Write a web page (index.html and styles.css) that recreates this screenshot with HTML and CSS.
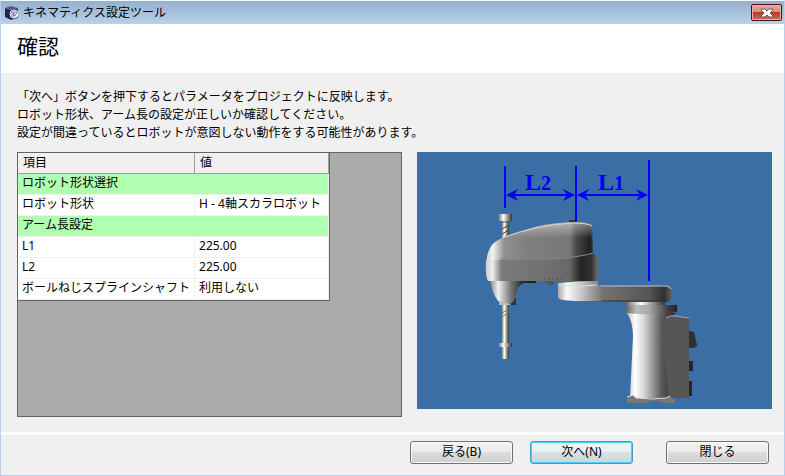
FILE: index.html
```html
<!DOCTYPE html>
<html lang="ja">
<head>
<meta charset="utf-8">
<title>キネマティクス設定ツール</title>
<link rel="stylesheet" href="styles.css">
</head>
<body>
<div class="window">
  <div class="titlebar">
    <svg class="app-icon" viewBox="0 0 16 16" aria-hidden="true">
      <path d="M1 3 7 1 14 3 8 5Z" fill="#555a88"/>
      <path d="M1 3 7 5V15L1 12Z" fill="#23264f"/>
      <path d="M7 5 14 3V13L7 15Z" fill="#383c70"/>
      <circle cx="10" cy="9" r="4" fill="#7377a3" stroke="#e8e8f4"/>
      <path d="M12 7.500A2.500 2.500 0 1 0 12 11M10 9h2.500v3" fill="none" stroke="#fff"/>
    </svg>
    <span class="caption">キネマティクス設定ツール</span>
    <button class="close" type="button" aria-label="閉じる">
      <svg viewBox="0 0 14 10" aria-hidden="true">
        <path d="M1 1h4l2 2 2-2h4v1l-3 3 3 3v1H9L7 7 5 9H1V8l3-3-3-3Z" fill="#fff" stroke="#5a5a68"/>
      </svg>
    </button>
  </div>
  <header class="heading"><h1>確認</h1></header>
  <main class="content">
    <p class="message">「次へ」ボタンを押下するとパラメータをプロジェクトに反映します。<br>ロボット形状、アーム長の設定が正しいか確認してください。<br>設定が間違っているとロボットが意図しない動作をする可能性があります。</p>
    <div class="panels">
      <div class="grid-panel">
        <table class="params">
          <thead><tr><th scope="col">項目</th><th scope="col">値</th></tr></thead>
          <tbody>
            <tr class="group"><td colspan="2">ロボット形状選択</td></tr>
            <tr><td>ロボット形状</td><td>H - 4軸スカラロボット</td></tr>
            <tr class="group"><td colspan="2">アーム長設定</td></tr>
            <tr><td>L1</td><td>225.00</td></tr>
            <tr><td>L2</td><td>225.00</td></tr>
            <tr><td>ボールねじスプラインシャフト</td><td>利用しない</td></tr>
          </tbody>
        </table>
      </div>
      <svg class="robot" viewBox="417 152 355 257" role="img" aria-label="L1 L2">
        <defs>
          <linearGradient id="metal"><stop offset="0" stop-color="#888"/><stop offset=".35" stop-color="#fff"/><stop offset=".6" stop-color="#aaa"/><stop offset="1" stop-color="#333"/></linearGradient>
          <linearGradient id="flange"><stop offset="0" stop-color="#666"/><stop offset=".2" stop-color="#bbb"/><stop offset=".45" stop-color="#aaa"/><stop offset=".8" stop-color="#444"/><stop offset="1" stop-color="#222"/></linearGradient>
          <linearGradient id="body"><stop offset="0" stop-color="#ccc"/><stop offset=".06" stop-color="#f4f4f4"/><stop offset=".16" stop-color="#909090"/><stop offset=".35" stop-color="#808080"/><stop offset=".74" stop-color="#777"/><stop offset=".8" stop-color="#484848"/><stop offset=".92" stop-color="#202020"/><stop offset="1" stop-color="#606060"/></linearGradient>
          <linearGradient id="lower"><stop offset="0" stop-color="#ccc"/><stop offset=".06" stop-color="#eee"/><stop offset=".14" stop-color="#7b7b7b"/><stop offset=".74" stop-color="#696969"/><stop offset=".84" stop-color="#222"/><stop offset=".93" stop-color="#303030"/><stop offset="1" stop-color="#777"/></linearGradient>
          <linearGradient id="shine" x2="0" y2="1"><stop offset="0" stop-color="#fff" stop-opacity=".45"/><stop offset=".5" stop-color="#fff" stop-opacity="0"/></linearGradient>
          <linearGradient id="nose"><stop offset="0" stop-color="#888"/><stop offset=".18" stop-color="#f0f0f0"/><stop offset=".45" stop-color="#777"/><stop offset=".7" stop-color="#2a2a2a"/><stop offset="1" stop-color="#1c1c1c"/></linearGradient>
          <linearGradient id="joint"><stop offset="0" stop-color="#aaa"/><stop offset=".2" stop-color="#fafafa"/><stop offset=".5" stop-color="#ccc"/><stop offset="1" stop-color="#777"/></linearGradient>
          <linearGradient id="arm"><stop offset="0" stop-color="#777"/><stop offset=".7" stop-color="#555"/><stop offset=".9" stop-color="#303030"/><stop offset="1" stop-color="#666"/></linearGradient>
          <linearGradient id="column"><stop offset="0" stop-color="#bbb"/><stop offset=".16" stop-color="#fff"/><stop offset=".34" stop-color="#d8d8d8"/><stop offset=".7" stop-color="#5c5c5c"/><stop offset="1" stop-color="#262626"/></linearGradient>
        </defs>
        <rect x="417" y="152" width="355" height="257" fill="#3a6ea5"/>
        <path d="M569 223v-3h8v3Z" fill="#333"/>
        <g>
          <rect x="502" y="220" width="7" height="22" fill="url(#metal)"/>
          <path d="m502 229 7-4M502 234l7-4M502 239l7-4" stroke="#444"/>
          <rect x="499" y="214" width="13" height="7" fill="url(#metal)"/>
          <path d="M501 222h10" stroke="#555"/>
          <rect x="502" y="302" width="7" height="57" fill="url(#metal)"/>
          <path d="m502 313 7-4M502 317l7-5" stroke="#777"/>
          <rect x="499" y="343" width="13" height="4" fill="url(#metal)"/>
          <path d="M499 301h11v4h-11Z" fill="#bbb"/>
          <path d="M511 298h5v7h-5Z" fill="#333"/>
          <path d="M490 280h46v3h-12q-5 1-7 8l-3 10-4 3-12-3q-6-8-8-21Z" fill="url(#nose)"/>
        </g>
        <path d="M545 280h9v5h-6v-2h-3Z" fill="#555"/>
        <path id="shell" d="M486 267q0-12 4-19 3-6 12-10 14-6 36-12 20-4 42-4 9 0 12 4l1 27 6 7-1 16-3 5H488q-2-5-2-14Z" fill="url(#body)"/>
        <path d="M496 241q14-7 42-15 20-4 42-4 9 0 12 4v28H490Z" fill="url(#shine)"/>
        <path d="M486 260h55q38-1 52-7l6 7-1 16-3 5H488q-3-6-2-21Z" fill="url(#lower)"/>
        <path d="M502 238q34-13 71-15 15 0 19 3" fill="none" stroke="#d5d5d5"/>
        <path d="M500 259h42q37-1 51-6" fill="none" stroke="#858585"/>
        <path d="M544 279h18" stroke="#505050" stroke-dasharray="2 2"/>
        <path d="M596 286h69q6 0 7 5v7q-1 4-5 4h-71Z" fill="url(#arm)"/>
        <path d="M597 286h67q6 0 7 3" fill="none" stroke="#c4c4c4"/>
        <path d="M580 301h88" stroke="#303030"/>
        <path d="M558 283q20-2 40-2v4l4 2v14q-24 1-39-1-5-1-5-3Z" fill="url(#joint)"/>
        <path d="M559 285q18 3 38 0" fill="none" stroke="#ddd"/>
        <path d="M628 302h37v4h-37Z" fill="url(#metal)"/>
        <path d="m689 331 5 1 3 13q0 2-3 3h-5Z" fill="#303030"/>
        <path d="M689 361h4v10h-4ZM689 381h3v15h-3Z" fill="#252525"/>
        <path d="M627 313h49q-12 8-12 25l6 60h-40l3-62q0-14-6-23Z" fill="url(#column)"/>
        <path d="M668 317q3-2 7-1l14 2v80h-20l-7-67q0-10 6-14Z" fill="#565656"/>
        <path d="m666 318q4-3 9-2l14 2" fill="none" stroke="#aaa"/>
        <path d="M626 305h51v7q-24 4-51 1Z" fill="url(#flange)"/>
        <path d="M627 397l6-2 3 3q15 2 30 0l4-2 5 4v3h-13l-3-2h-8l-3 2h-21Z" fill="#777"/>
        <path d="M627 397l6-2 3 3q15 2 30 0l4-2" fill="none" stroke="#ddd"/>
        <g fill="none" stroke="#00f" stroke-width="2">
          <path d="M505 166v42M576 166v55M649 160v121M508 195h65M579 195h67"/>
        </g>
        <path d="m506 195 12-6-4 6 4 6ZM575 195l-12-6 4 6-4 6ZM577 195l12-6-4 6 4 6ZM648 195l-12-6 4 6-4 6Z" fill="#00f"/>
        <g class="dimension"><text x="525" y="190">L<tspan class="digit">2</tspan></text><text x="598" y="190">L<tspan class="digit">1</tspan></text></g>
      </svg>
    </div>
  </main>
  <footer class="actions">
    <button type="button">戻る(B)</button>
    <button class="primary" type="button">次へ(N)</button>
    <button class="dismiss" type="button">閉じる</button>
  </footer>
</div>
</body>
</html>
```
FILE: styles.css
```css
* { box-sizing: border-box; }
body {
  margin: 0;
  color: #000;
  font: 12px/18px "Noto Sans", "Noto Sans CJK JP", sans-serif;
}
.window {
  display: flex;
  flex-direction: column;
  min-height: 100vh;
  background: #f0f0f0;
  border: 1px solid #b9d1ea;
  border-top-color: #f4f8fc;
}
.titlebar {
  display: flex;
  align-items: center;
  height: 23px;
  padding: 0 2px 0 3px;
  background: linear-gradient(#94b0cd, #b9d1ea);
}
.app-icon { width: 16px; height: 16px; margin-right: 3px; }
.caption { flex: 1; }
.close {
  display: flex;
  align-items: center;
  justify-content: center;
  width: 31px;
  height: 17px;
  padding: 0;
  border: 1px solid #43141c;
  border-radius: 2px;
  background: linear-gradient(#e9a99d, #d98a7c 48%, #bb3b27 50%, #d06b58);
  box-shadow: inset 0 0 0 1px #e9b3a8;
}
.close svg { width: 14px; height: 10px; }
.heading { padding: 8px 16px 13px; background: #fff; }
h1 { margin: 0; font-size: 21px; line-height: 28px; font-weight: 400; }
.content { flex: 1; padding: 15px 12px 15px 16px; }
.message { margin: 0 0 10px; }
.panels {
  display: grid;
  grid-template-columns: 385fr 355fr;
  gap: 15px;
  align-items: start;
}
.grid-panel {
  min-height: 265px;
  border: 1px solid #646464;
  background: #ababab;
}
.params {
  border-collapse: separate;
  border-spacing: 0;
  border-right: 1px solid #646464;
  border-bottom: 1px solid #646464;
  background: #fff;
}
.params th, .params td {
  height: 21px;
  padding: 0 4px 2px;
  line-height: 18px;
  text-align: left;
  font-weight: 400;
  white-space: nowrap;
  border-right: 1px solid #f0f0f0;
  border-bottom: 1px solid #f0f0f0;
}
.params th {
  padding: 1px 5px;
  background: #f0f0f0;
  border-color: #a0a0a0;
}
.params th:first-child { width: 177px; }
.params th:last-child { width: 134px; }
.params .group td { background: #b0ffb0; }
.robot { display: block; width: 100%; }
.dimension { fill: #00f; font: bold 24px "Liberation Serif", serif; }
.digit { font-size: 20px; }
.actions {
  display: flex;
  justify-content: flex-end;
  gap: 17px;
  padding: 6px 15px 11px;
  border-top: 3px solid #fff;
}
.actions button {
  width: 103px;
  height: 23px;
  padding: 0 0 2px;
  font: inherit;
  color: #000;
  border: 1px solid #707070;
  border-radius: 3px;
  background: linear-gradient(#f2f2f2, #ebebeb 48%, #dddddd 50%, #cfcfcf);
  box-shadow: inset 0 0 0 1px #fafafa;
}
.actions .primary {
  border-color: #3c9fc8;
  background: linear-gradient(#f0f4f5, #e8eef0 48%, #d9e1e5 50%, #cbd4d8);
  box-shadow: inset 0 0 0 1px #48d0f8;
}
.actions .dismiss { margin-left: 16px; }
```
